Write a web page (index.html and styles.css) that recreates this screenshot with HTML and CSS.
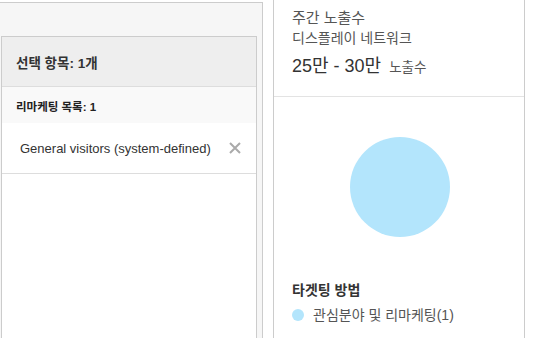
FILE: index.html
```html
<!DOCTYPE html>
<html lang="ko">
<head>
    <meta charset="UTF-8">
    <meta name="viewport" content="width=device-width, initial-scale=1.0">
    <title>타겟팅 선택</title>
    <link rel="stylesheet" href="styles.css">
</head>
<body>

    <div class="page">

        <!-- Selected items -->
        <div class="selection-panel">
            <div class="selection-box">
                <div class="selection-header">선택 항목: 1개</div>
                <div class="group-header">리마케팅 목록: 1</div>
                <div class="selected-row">
                    <span>General visitors (system-defined)</span>
                    <span class="remove">
                        <svg width="12" height="12" viewBox="0 0 12 12">
                            <path d="M1 1 L11 11 M11 1 L1 11" stroke="#aaa" stroke-width="2" fill="none"/>
                        </svg>
                    </span>
                </div>
            </div>
        </div>

        <!-- Weekly estimate -->
        <div class="summary-panel">
            <div class="estimate">
                <div class="estimate-title">주간 노출수</div>
                <div class="estimate-network">디스플레이 네트워크</div>
                <div class="estimate-value">25만 - 30만 <span class="estimate-unit">노출수</span></div>
            </div>

            <div class="chart">
                <svg width="100" height="100" viewBox="0 0 100 100">
                    <circle cx="50" cy="50" r="50" fill="#b3e5fc"/>
                </svg>
            </div>

            <div class="targeting">
                <div class="targeting-title">타겟팅 방법</div>
                <div class="legend"><span class="dot"></span>관심분야 및 리마케팅(1)</div>
            </div>
        </div>

    </div>

</body>
</html>
```
FILE: styles.css
```css
body {
    margin: 0;
    font-family: "Liberation Sans", Arial, "Noto Sans CJK KR", sans-serif;
    color: #333;
    background: #fff;
    overflow: hidden;
}

.page {
    display: flex;
    align-items: stretch;
    height: 338px;
}

/* Left panel */
.selection-panel {
    display: flex;
    flex-direction: column;
    box-sizing: border-box;
    width: 268px;
    margin-left: -5px;
    margin-top: 2px;
    padding: 33px 5px 0 5px;
    border: 1px solid #ccc;
    border-bottom: none;
    background-color: #f6f6f6;
}

.selection-box {
    flex: 1;
    background-color: #fff;
    border: 1px solid #ccc;
    border-bottom: none;
}

.selection-header {
    display: flex;
    align-items: center;
    height: 49px;
    padding: 0 14px;
    background-color: #eee;
    border-bottom: 1px solid #ddd;
    font-size: 13.5px;
    font-weight: bold;
    color: #333;
}

.group-header {
    display: flex;
    align-items: center;
    height: 36px;
    padding: 1px 14px 0;
    box-sizing: border-box;
    background-color: #f9f9f9;
    font-size: 11.5px;
    font-weight: bold;
    color: #222;
}

.selected-row {
    display: flex;
    align-items: center;
    justify-content: space-between;
    height: 50px;
    padding: 0 15px 0 18px;
    border-bottom: 1px solid #ddd;
    font-size: 13px;
    color: #333;
}

.remove {
    display: flex;
    cursor: pointer;
}

/* Right panel */
.summary-panel {
    box-sizing: border-box;
    width: 252px;
    margin-left: 10px;
    border-left: 1px solid #ccc;
    border-right: 1px solid #ccc;
}

.estimate {
    box-sizing: border-box;
    height: 97px;
    padding: 8px 18px 0;
    border-bottom: 1px solid #e3e3e3;
}

.estimate-title {
    font-size: 15px;
    line-height: 20px;
    color: #555;
}

.estimate-network {
    font-size: 14px;
    line-height: 20px;
    color: #555;
}

.estimate-value {
    margin-top: 6px;
    font-size: 18px;
    line-height: 24px;
    color: #333;
}

.estimate-unit {
    margin-left: 3px;
    font-size: 13.5px;
    color: #555;
}

.chart {
    display: flex;
    justify-content: center;
    padding: 40px 0 43px 1px;
}

.targeting {
    padding: 0 18px;
}

.targeting-title {
    font-size: 14px;
    font-weight: bold;
    line-height: 20px;
    color: #333;
}

.legend {
    display: flex;
    align-items: center;
    margin-top: 5px;
    font-size: 14px;
    line-height: 20px;
    color: #555;
}

.dot {
    width: 12px;
    height: 12px;
    margin-right: 9px;
    border-radius: 50%;
    background-color: #b3e5fc;
}
```
